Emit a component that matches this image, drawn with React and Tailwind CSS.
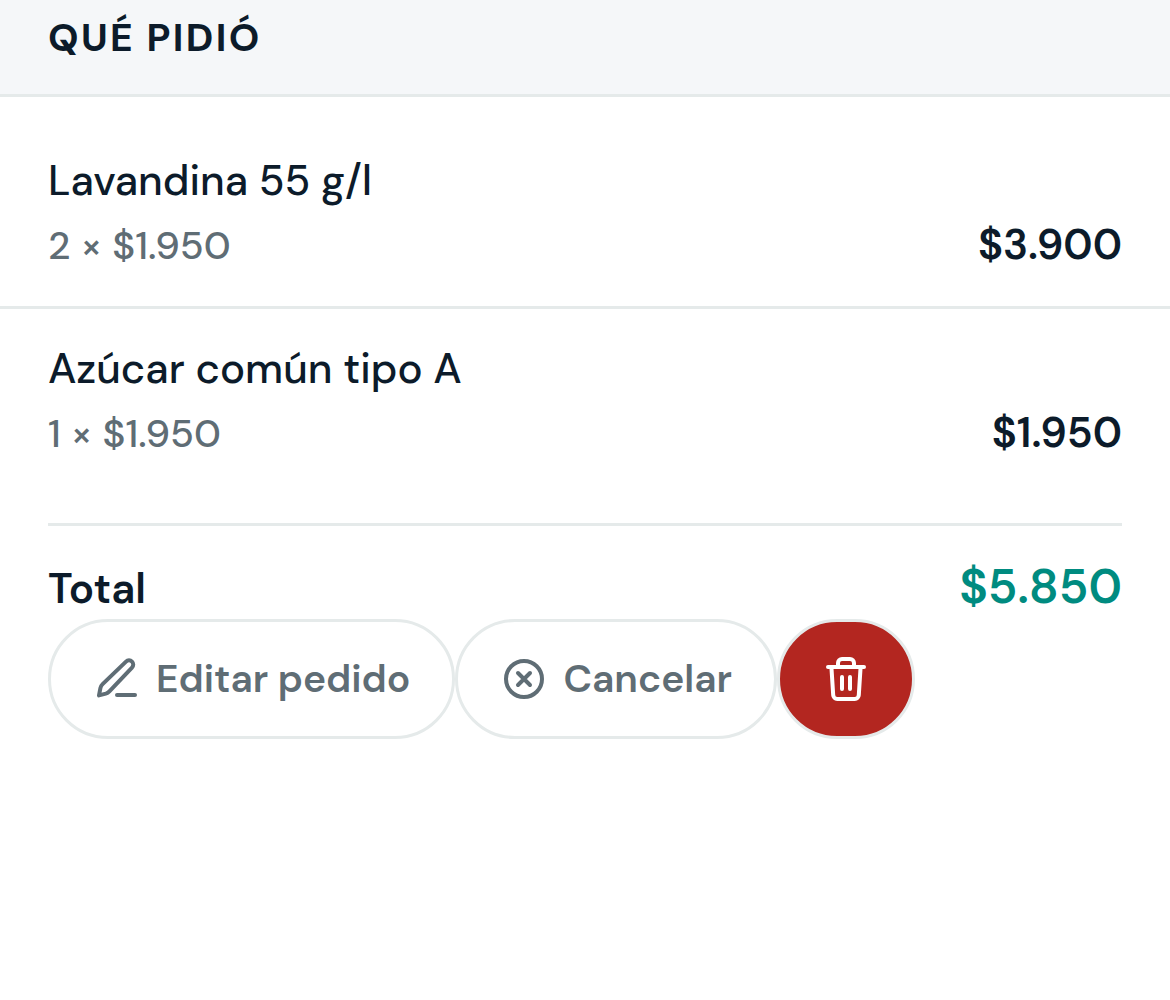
const ITEMS = [
  { name: 'Lavandina 55 g/l', qty: 2, price: 1950 },
  { name: 'Azúcar común tipo A', qty: 1, price: 1950 },
];

const money = (n) => '$' + String(n).replace(/\B(?=(\d{3})+$)/g, '.');

function Icon({ children }) {
  return (
    <svg className="size-12 shrink-0" viewBox="0 0 24 24" fill="none" stroke="currentColor"
         strokeWidth={2} strokeLinecap="round" strokeLinejoin="round" aria-hidden="true">
      {children}
    </svg>
  );
}

function PillButton({ className, children, ...rest }) {
  return (
    <button
      type="button"
      className={`flex h-[120px] items-center gap-[15px] rounded-full border-3 border-[#e5eaea] px-[42px] text-[39px] leading-[60px] font-semibold ${className}`}
      {...rest}
    >
      {children}
    </button>
  );
}

export default function App() {
  const total = ITEMS.reduce((sum, i) => sum + i.qty * i.price, 0);

  return (
    <div className="min-h-screen bg-white font-['DM_Sans','Inter',sans-serif] text-[#0c1b2a]">

      {/* Header */}
      <header className="border-b-3 border-[#e5eaea] bg-[#f5f7f9] px-12 pt-2 pb-[26px]">
        <h2 className="text-[39px] leading-[60px] font-bold tracking-[0.06em]">QUÉ PIDIÓ</h2>
      </header>

      {/* Items */}
      <ul className="pt-6">
        {ITEMS.map((item) => (
          <li key={item.name}
              className="flex items-end justify-between border-b-3 border-[#e5eaea] px-12 pt-7 pb-[30px] last:border-b-0">
            <div>
              <p className="text-[42px] leading-[63px] font-medium">{item.name}</p>
              <p className="mt-1 text-[39px] leading-[60px] font-medium text-[#5f6d75]">{item.qty} × {money(item.price)}</p>
            </div>
            <span className="text-[42px] leading-[63px] font-semibold">{money(item.qty * item.price)}</span>
          </li>
        ))}
      </ul>

      {/* Total + actions */}
      <div className="mt-[29px] px-12">
        <div className="flex items-baseline justify-between border-t-3 border-[#e5eaea] pt-[31px]">
          <span className="text-[42px] leading-[60px] font-semibold">Total</span>
          <span className="text-[48px] leading-[60px] font-semibold text-[#008b80]">{money(total)}</span>
        </div>
        <div className="flex">
          <PillButton className="text-[#5f6d75]">
            <Icon>
              <path d="M12 20h9" />
              <path d="M16.5 3.3a2 2 0 0 1 3 3L8.2 18.2a4 4 0 0 1-1.8 1.1L3 20.2l.7-3.6a4 4 0 0 1 1.1-2z" />
            </Icon>
            Editar pedido
          </PillButton>
          <PillButton className="text-[#5f6d75]">
            <Icon>
              <circle cx="12" cy="12" r="9" />
              <path d="M9 9l6 6M15 9l-6 6" />
            </Icon>
            Cancelar
          </PillButton>
          <PillButton className="bg-[#b32620] text-white" aria-label="Eliminar pedido">
            <Icon>
              <path d="M3 6h18" />
              <path d="M8 6V4a2 2 0 0 1 2-2h4a2 2 0 0 1 2 2v2" />
              <path d="M19.3 6l-.9 14.1a2 2 0 0 1-2 1.9H7.6a2 2 0 0 1-2-1.9L4.7 6" />
              <path d="M10 11v6M14 11v6" />
            </Icon>
          </PillButton>
        </div>
      </div>
    </div>
  );
}
